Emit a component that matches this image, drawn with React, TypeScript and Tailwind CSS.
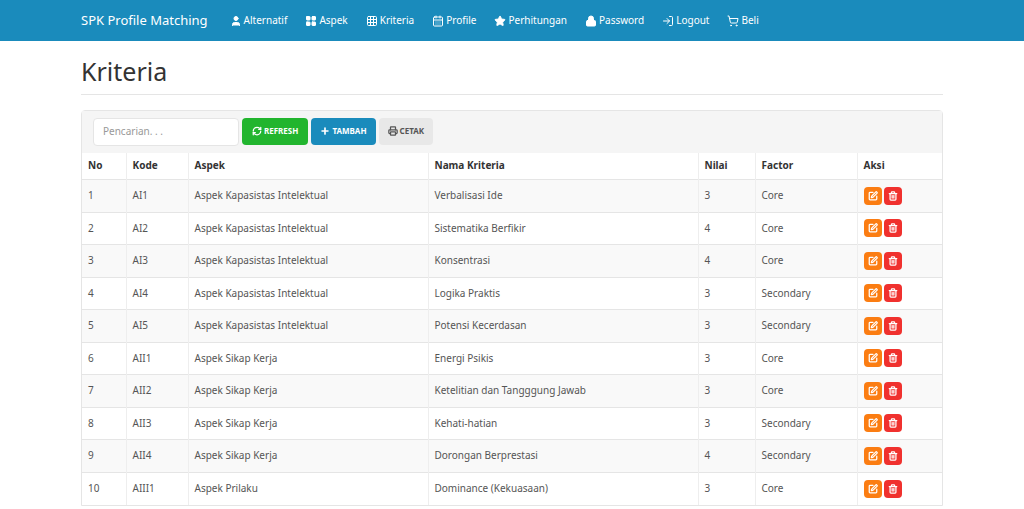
import { User, LayoutGrid, Grid3x3, CalendarDays, Star, Lock, LogIn, ShoppingCart, RefreshCw, Plus, Printer, SquarePen, Trash2 } from 'lucide-react';

const rows = [
	['1', 'AI1', 'Aspek Kapasistas Intelektual', 'Verbalisasi Ide', '3', 'Core'],
	['2', 'AI2', 'Aspek Kapasistas Intelektual', 'Sistematika Berfikir', '4', 'Core'],
	['3', 'AI3', 'Aspek Kapasistas Intelektual', 'Konsentrasi', '4', 'Core'],
	['4', 'AI4', 'Aspek Kapasistas Intelektual', 'Logika Praktis', '3', 'Secondary'],
	['5', 'AI5', 'Aspek Kapasistas Intelektual', 'Potensi Kecerdasan', '3', 'Secondary'],
	['6', 'AII1', 'Aspek Sikap Kerja', 'Energi Psikis', '3', 'Core'],
	['7', 'AII2', 'Aspek Sikap Kerja', 'Ketelitian dan Tangggung Jawab', '3', 'Core'],
	['8', 'AII3', 'Aspek Sikap Kerja', 'Kehati-hatian', '3', 'Secondary'],
	['9', 'AII4', 'Aspek Sikap Kerja', 'Dorongan Berprestasi', '4', 'Secondary'],
	['10', 'AIII1', 'Aspek Prilaku', 'Dominance (Kekuasaan)', '3', 'Core'],
];

const nav = [
	{ icon: User, label: 'Alternatif' },
	{ icon: LayoutGrid, label: 'Aspek' },
	{ icon: Grid3x3, label: 'Kriteria' },
	{ icon: CalendarDays, label: 'Profile' },
	{ icon: Star, label: 'Perhitungan' },
	{ icon: Lock, label: 'Password' },
	{ icon: LogIn, label: 'Logout' },
	{ icon: ShoppingCart, label: 'Beli' },
];

const widths = ['w-[44px]', 'w-[62px]', 'w-[240px]', 'w-[270px]', 'w-[57px]', 'w-[102px]', ''];

export default function App() {
	return (
		<div className="h-[509px] overflow-hidden bg-white font-['Open_Sans',sans-serif] text-[#555]">
			<nav className="flex h-[41px] items-center bg-[#1a8bbc] pl-[81px] text-white">
				<span className="mr-[22px] text-[13px]">SPK Profile Matching</span>
				<div className="flex gap-[18px] text-[10px]">
					{nav.map((n) => (
						<span key={n.label} className="flex items-center gap-[2px]">
							<n.icon className="size-3" fill={n.icon === Star || n.icon === User || n.icon === Lock || n.icon === LayoutGrid ? 'white' : 'none'} />
							{n.label}
						</span>
					))}
				</div>
			</nav>
			<div className="mx-[81px]">
				<h1 className="mt-[12px] border-b border-[#e5e5e5] pb-[3px] text-[25px] text-[#333]">Kriteria</h1>
				<div className="mt-[15px] rounded-t-sm border border-[#e5e5e5]">
					<div className="flex gap-[3px] bg-[#f5f5f5] px-[11px] py-[7px]">
						<div className="flex h-[28px] w-[146px] items-center rounded-sm border border-[#e5e5e5] bg-white px-[9px] text-[10px] text-[#999]">
							Pencarian. . .
						</div>
						<button className="flex h-[27px] items-center gap-[2px] rounded-sm bg-[#22b52e] px-[10px] text-[8px] font-bold text-white">
							<RefreshCw className="size-[10px]" strokeWidth={3} />REFRESH
						</button>
						<button className="flex h-[27px] items-center gap-[2px] rounded-sm bg-[#1a8bbc] px-[9px] text-[8px] font-bold text-white">
							<Plus className="size-[10px]" strokeWidth={4} />TAMBAH
						</button>
						<button className="flex h-[27px] items-center gap-[2px] rounded-sm bg-[#e8e8e8] px-[9px] text-[8px] font-bold text-[#555]">
							<Printer className="size-[10px]" strokeWidth={3} />CETAK
						</button>
					</div>
					<table className="w-full border-collapse text-[10px]">
						<thead>
							<tr className="h-[27px] bg-white text-left font-bold text-[#333]">
								{['No', 'Kode', 'Aspek', 'Nama Kriteria', 'Nilai', 'Factor', 'Aksi'].map((h, i) => (
									<th key={h} className={`${widths[i]} border-l border-[#eee] px-[6px] first:border-l-0`}>{h}</th>
								))}
							</tr>
						</thead>
						<tbody>
							{rows.map((r, i) => (
								<tr key={r[0]} className={`h-[32.5px] border-t border-[#e5e5e5] ${i % 2 === 0 ? 'bg-[#f9f9f9]' : 'bg-white'}`}>
									{r.map((c, j) => (
										<td key={j} className="border-l border-[#eee] px-[6px] first:border-l-0">{c}</td>
									))}
									<td className="border-l border-[#eee] px-[6px]">
										<div className="flex gap-[2px]">
											<span className="flex size-[18px] items-center justify-center rounded-sm bg-[#fb7d12] text-white"><SquarePen className="size-[10px]" strokeWidth={3} /></span>
											<span className="flex size-[18px] items-center justify-center rounded-sm bg-[#f0312e] text-white"><Trash2 className="size-[10px]" strokeWidth={3} /></span>
										</div>
									</td>
								</tr>
							))}
						</tbody>
					</table>
				</div>
			</div>
		</div>
	);
}
